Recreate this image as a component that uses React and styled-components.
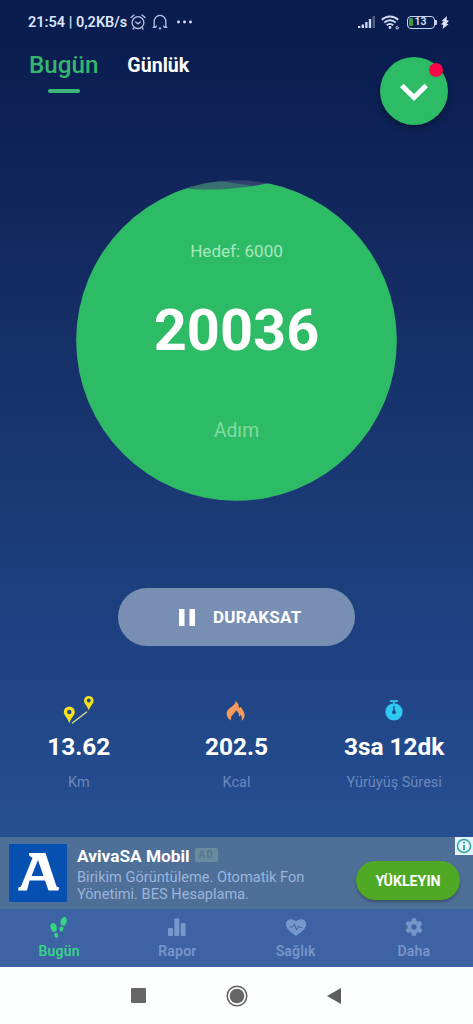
import styled, { createGlobalStyle } from "styled-components";

const GlobalStyle = createGlobalStyle`
  * {
    box-sizing: border-box;
  }
  body {
    margin: 0;
    font-family: Roboto, "Noto Sans", sans-serif;
  }
  button {
    border: 0;
    padding: 0;
    font-family: inherit;
  }
  svg {
    display: block;
    flex: none;
  }
`;

const Screen = styled.div`
  display: flex;
  flex-direction: column;
  width: 473px;
  height: 1024px;
  overflow: hidden;
  background: linear-gradient(#091c4d 0, #0c2055 100px, #13295f 240px, #18356f 430px, #1d4180 620px, #264f92 837px);
`;

const StatusBar = styled.div`
  display: flex;
  align-items: center;
  justify-content: space-between;
  height: 44px;
  padding: 0 24px 0 28px;
  color: #dbe4fa;
`;

const StatusGroup = styled.div`
  display: flex;
  align-items: center;
  gap: ${(p) => p.$gap}px;
`;

const StatusText = styled.span`
  width: 96px;
  font-size: 14.5px;
  font-weight: 600;
  white-space: nowrap;
`;

const Header = styled.header`
  display: flex;
  justify-content: space-between;
  height: 136px;
  padding: 0 25px 0 29px;
`;

const Tabs = styled.nav`
  display: flex;
  gap: 29px;
`;

const Tab = styled.div`
  display: flex;
  flex-direction: column;
  align-items: center;
  height: 50px;
  padding-top: ${(p) => (p.$active ? 6 : 9)}px;
  color: ${(p) => (p.$active ? "#35b56e" : "#fff")};
  font-size: ${(p) => (p.$active ? 24.2 : 19.6)}px;
  font-weight: ${(p) => (p.$active ? 500 : 700)};
  line-height: ${(p) => (p.$active ? 30 : 26)}px;

  &::after {
    content: "";
    display: ${(p) => (p.$active ? "block" : "none")};
    width: 32px;
    height: 4px;
    margin-top: 9px;
    border-radius: 2px;
    background: #3cb878;
  }
`;

const ExpandButton = styled.button`
  position: relative;
  display: grid;
  place-items: center;
  width: 68px;
  height: 68px;
  margin-top: 13px;
  border-radius: 50%;
  background: #2dbb66;
  box-shadow: 0 3px 6px rgba(0, 0, 0, 0.35);
`;

const Dot = styled.span`
  position: absolute;
  top: 6px;
  right: 5px;
  width: 14px;
  height: 14px;
  border-radius: 50%;
  background: #fb0548;
`;

const Dial = styled.section`
  position: relative;
  display: flex;
  flex-direction: column;
  align-items: center;
  flex: none;
  width: 321px;
  height: 321px;
  margin: 0 auto;
`;

const DialShape = styled.svg`
  position: absolute;
  inset: 0;
`;

const DialText = styled.span`
  position: relative;
  margin-top: ${(p) => p.$top}px;
  color: ${(p) => p.$color};
  font-size: ${(p) => p.$size}px;
  font-weight: ${(p) => p.$weight || 400};
  line-height: ${(p) => p.$line}px;
`;

const PauseButton = styled.button`
  display: flex;
  align-items: center;
  flex: none;
  width: 237px;
  height: 58px;
  margin: 87px auto 0;
  padding-left: 61px;
  gap: 18px;
  border-radius: 29px;
  background: #788fb3;
  color: #fff;
  font-size: 17px;
  font-weight: 700;
  letter-spacing: 0.2px;
`;

const Stats = styled.section`
  display: grid;
  grid-template-columns: repeat(3, 1fr);
  height: 191px;
  padding-top: 49px;
`;

const Stat = styled.div`
  display: flex;
  flex-direction: column;
  align-items: center;
`;

const StatValue = styled.strong`
  margin-top: 6px;
  color: #fff;
  font-size: 24.4px;
  font-weight: 700;
  line-height: 32px;
`;

const StatLabel = styled.span`
  margin-top: 10px;
  color: #6a89bd;
  font-size: 14.5px;
  line-height: 20px;
`;

const Ad = styled.aside`
  position: relative;
  display: flex;
  flex: none;
  height: 72px;
  padding: 7px 13px 0 9px;
  background: #4e6f98;
`;

const AdText = styled.div`
  flex: 1;
  padding: 2px 0 0 10px;
`;

const AdTitle = styled.div`
  display: flex;
  align-items: center;
  gap: 5px;
  color: #fff;
  font-size: 17.3px;
  font-weight: 700;
  line-height: 20px;
`;

const AdBadge = styled.span`
  width: 23px;
  height: 14px;
  margin-top: -2px;
  border-radius: 2px;
  background: #6d8b9f;
  color: #547690;
  font-size: 10px;
  letter-spacing: 1px;
  line-height: 14px;
  text-align: center;
`;

const AdBody = styled.p`
  margin: 3px 0 0;
  color: #9bb5dc;
  font-size: 14.6px;
  line-height: 17px;
  white-space: nowrap;
`;

const InstallButton = styled.button`
  width: 104px;
  height: 39px;
  margin-top: 17px;
  border-radius: 20px;
  background: #4fa925;
  box-shadow: 0 2px 3px rgba(0, 0, 0, 0.3);
  color: #fff;
  font-size: 14.2px;
  font-weight: 700;
`;

const AdInfo = styled.span`
  position: absolute;
  top: 0;
  right: 0;
  width: 18px;
  height: 18px;
  background: #e6f3f8;
`;

const BottomTabs = styled.nav`
  display: grid;
  grid-template-columns: repeat(4, 1fr);
  flex: none;
  height: 58px;
  background: #3d63a4;
`;

const BottomTab = styled.div`
  display: flex;
  flex-direction: column;
  align-items: center;
  padding-top: 7px;
  color: ${(p) => (p.$active ? "#37d487" : "#7796ca")};
  font-size: 14px;
  font-weight: 600;
  line-height: 18px;
  letter-spacing: 0.2px;

  svg {
    margin-bottom: 2px;
  }
`;

const SystemNav = styled.div`
  display: flex;
  align-items: center;
  justify-content: space-between;
  flex: 1;
  padding: 0 132px 0 131px;
  background: #fdfefe;
`;

const AlarmIcon = () => (
  <svg width="16" height="16" viewBox="0 0 16 16" fill="none" stroke="#b9c6e8" strokeWidth="1.3" strokeLinecap="round">
    <circle cx="8" cy="8.6" r="5.9" />
    <path d="M1 3.6 4 1M15 3.6 12 1M5.7 8l2.3 1.8L10.300 8M3.800 14l-.8 1M12.200 14l.8 1" />
  </svg>
);

const HeadsetIcon = () => (
  <svg width="16" height="16" viewBox="0 0 16 16" fill="none" stroke="#b9c6e8" strokeWidth="1.3">
    <path d="M2.200 13V7.200a5.800 5.800 0 0 1 11.600 0V13M.6 13.400h2.600c1 0 1.300-.6 1.300-1.800M15.400 13.400h-2.600c-1 0-1.300-.6-1.300-1.800" />
    <path d="M6.800 14.400h2.400" strokeWidth="1.800" />
  </svg>
);

const DotsIcon = () => (
  <svg width="19" height="4" viewBox="0 0 19 4" fill="#dbe4fa">
    <circle cx="4.500" cy="2" r="1.400" />
    <circle cx="10.500" cy="2" r="1.400" />
    <circle cx="16.500" cy="2" r="1.400" />
  </svg>
);

const SignalIcon = () => (
  <svg width="17" height="12" viewBox="0 0 17 12" fill="#d0daf3">
    <path d="M0 10h2.3v2H0zM3.6 8.6H6V12H3.6zM7.2 6h2.3v6H7.2zM10.8 3h2.4v9h-2.4z" />
    <path d="M14.6 0H17v12h-2.4z" opacity=".35" />
  </svg>
);

const WifiIcon = () => (
  <svg width="19" height="15" viewBox="0 0 19 15" fill="none" stroke="#d0daf3" strokeWidth="2">
    <path d="M.8 4.7a12 12 0 0 1 16.400 0M3.300 7.600a8.200 8.200 0 0 1 11.400 0M5.800 10.300a4.600 4.600 0 0 1 6.400 0" />
    <circle cx="9" cy="12.500" r="1.400" fill="#d0daf3" stroke="none" />
    <circle cx="16.200" cy="12.800" r="1.200" strokeWidth="1" />
  </svg>
);

const Battery = styled.span`
  position: relative;
  display: flex;
  align-items: center;
  width: 28px;
  height: 13px;
  padding-left: 1px;
  border: 1.5px solid #cbd7f2;
  border-radius: 4px;
  font-size: 10.5px;
  font-weight: 600;
  line-height: 12px;

  &::before {
    content: "";
    width: 4px;
    height: 8px;
    margin-right: 2px;
    border-radius: 1px;
    background: #3f9a3c;
  }
  &::after {
    content: "";
    position: absolute;
    right: -3.5px;
    top: 3px;
    width: 2px;
    height: 5px;
    border-radius: 0 1px 1px 0;
    background: #cbd7f2;
  }
`;

const BoltIcon = () => (
  <svg width="8" height="13" viewBox="0 0 8 13" fill="#dbe4fa">
    <path d="M6 0 .8 4.800l2 .8L0 8.200l2.300.7L1.500 13 7.500 8.200 5.400 7.400 8 4.800 5.500 4z" />
  </svg>
);

const RouteIcon = () => (
  <svg width="32" height="30" viewBox="0 0 32 30">
    <path d="M9 28.3 24 16.8" stroke="#dbe88a" strokeWidth="1.3" />
    <path
      fill="#f7e11d"
      fillRule="evenodd"
      d="M6.3 28.5C5 23 .8 20.500.8 17a5.500 5.500 0 0 1 11 0c0 3.500-4.200 6-5.500 11.500zM6.300 14.700a2.200 2.200 0 1 0 0 4.400 2.200 2.200 0 0 0 0-4.400zM25.800 15.500c-1.200-4.500-4.800-6.700-4.800-9.800a4.800 4.800 0 0 1 9.600 0c0 3.100-3.600 5.300-4.800 9.800zM25.800 3.500a2 2 0 1 0 0 4 2 2 0 0 0 0-4z"
    />
  </svg>
);

const FlameIcon = () => (
  <svg width="20" height="30" viewBox="0 0 20 30">
    <path
      fill="#f79a5b"
      d="M5.300 25.500C1.500 23.500-.4 19.700 1.200 16 2.600 12.700 9 11 9.900 5.900c2.200 2 3.400 4.700 3 7.600l1.500-1.800c2.400 2.900 4.700 6.200 4.100 9.500-.4 2-1.400 3.600-3 4.500.8-2.200.5-4-1-5.900-.3 1-.8 1.600-1.500 2 .2-3-.8-4.900-2.900-6.500-.4 2.500-3.400 3.900-4.500 5.700-.9 1.400-.9 2.900-.3 4.500z"
    />
  </svg>
);

const TimerIcon = () => (
  <svg width="18" height="30" viewBox="0 0 18 30">
    <circle cx="9" cy="16.900" r="8.600" fill="#2fc8f2" />
    <path d="M5 6.200h8M9 6v3" stroke="#2fc8f2" strokeWidth="1.700" />
    <path d="M9 11.200v5" stroke="#1d4a86" strokeWidth="1.500" />
    <circle cx="9" cy="17.200" r="1.900" fill="#1d4a86" />
  </svg>
);

const AdLogo = () => (
  <svg width="58" height="58" viewBox="0 0 58 58">
    <path fill="#0650b2" d="M0 0h58v58H0z" />
    <path
      fill="#fff"
      fillRule="evenodd"
      d="M20 9h16.500L47.500 42.500l2.500 1-.5 3H39.500L36 36.500H20.500L18 46.500H9l.5-3 2.500-1L23.500 14l-3.300-2.500zM29 16 22.500 32H34.500z"
    />
  </svg>
);

const InfoIcon = () => (
  <svg width="18" height="18" viewBox="0 0 18 18" fill="none" stroke="#2fa9ad" strokeWidth="1.500">
    <circle cx="9" cy="9" r="6.500" />
    <path d="M9 7.800V13M9 4.800v1.700" strokeWidth="1.900" />
  </svg>
);

const StepsIcon = () => (
  <svg width="20" height="24" viewBox="0 0 20 24" fill="currentColor">
    <path d="M3.200 7.200c2.200-.5 4 1.200 4.500 3.600.4 1.800 0 3.200-.4 4.500l-3.500.8C2.900 14.300 1.300 13 1.300 10.600c0-1.600.6-3.100 1.900-3.400z" />
    <ellipse cx="7.200" cy="19.300" rx="1.900" ry="2.600" transform="rotate(-14 7.200 19.300)" />
    <path d="M15.800 1c1.600.2 2.200 2 2 4-.2 2.200-1.500 3.700-2.600 4.900l-3.400-1.400c-.2-1.400-.5-2.800.2-4.500.7-1.800 2.100-3.200 3.800-3z" />
    <ellipse cx="12.400" cy="13" rx="1.900" ry="2.700" transform="rotate(20 12.400 13)" />
  </svg>
);

const ChartIcon = () => (
  <svg width="18" height="24" viewBox="0 0 18 24" fill="currentColor">
    <rect x="0" y="12" width="5" height="8" rx="1" />
    <rect x="6.300" y="2.500" width="5" height="17.500" rx="1" />
    <rect x="12.600" y="7" width="5" height="13" rx="1" />
  </svg>
);

const HeartIcon = () => (
  <svg width="22" height="24" viewBox="0 0 22 24">
    <path
      fill="currentColor"
      d="M11 20C7 17 .8 13 .8 8.300c0-5.200 6.700-6.900 10.200-3 3.500-3.900 10.200-2.200 10.200 3C21.200 13 15 17 11 20z"
    />
    <path d="M5 11h2.500l1.800-3 2.400 6 1.800-4 1 1.500H17" fill="none" stroke="#3d63a4" strokeWidth="1" />
  </svg>
);

const GearIcon = () => (
  <svg width="18" height="24" viewBox="0 0 18 24">
    <path
      fill="currentColor"
      fillRule="evenodd"
      stroke="currentColor"
      strokeWidth=".6"
      strokeLinejoin="round"
      d="M7.300 2.500h3.400l.6 2.700 1.500.9 2.600-.8 1.700 3-2 1.800v1.800l2 1.800-1.700 3-2.600-.8-1.500.9-.6 2.700H7.300l-.6-2.700-1.500-.9-2.600.8-1.700-3 2-1.800v-1.800l-2-1.800 1.700-3 2.600.8 1.500-.9zM9 8a3 3 0 1 0 0 6 3 3 0 0 0 0-6z"
    />
  </svg>
);

const stats = [
  { Icon: RouteIcon, value: "13.62", label: "Km" },
  { Icon: FlameIcon, value: "202.5", label: "Kcal" },
  { Icon: TimerIcon, value: "3sa 12dk", label: "Yürüyüş Süresi" },
];

const bottomTabs = [
  { Icon: StepsIcon, label: "Bugün", active: true },
  { Icon: ChartIcon, label: "Rapor" },
  { Icon: HeartIcon, label: "Sağlık" },
  { Icon: GearIcon, label: "Daha" },
];

const App = () => {
  return (
    <Screen>
      <GlobalStyle />
      <StatusBar>
        <StatusGroup $gap={6}>
          <StatusText>21:54 | 0,2KB/s</StatusText>
          <AlarmIcon />
          <HeadsetIcon />
          <DotsIcon />
        </StatusGroup>
        <StatusGroup $gap={6.5}>
          <SignalIcon />
          <WifiIcon />
          <Battery>13</Battery>
          <BoltIcon />
        </StatusGroup>
      </StatusBar>

      <Header>
        <Tabs>
          <Tab $active>Bugün</Tab>
          <Tab>Günlük</Tab>
        </Tabs>
        <ExpandButton>
          <svg width="30" height="22" viewBox="0 0 30 22" fill="none" stroke="#fff" strokeWidth="5">
            <path d="M2.800 5.500 15 17.500 27.200 5.500" />
          </svg>
          <Dot />
        </ExpandButton>
      </Header>

      <Dial>
        <DialShape width="321" height="321" viewBox="0 0 321 321">
          <clipPath id="dial">
            <circle cx="160.500" cy="160.500" r="160.300" />
          </clipPath>
          <g clipPath="url(#dial)">
            <path fill="#30416f" d="M0 0h321v321H0z" />
            <path fill="#37716f" d="M90 12Q120 0 145 1.500C162 3 175 7 190 6v10H90z" />
            <path fill="#2dbb66" d="M0 8h105c20 2 38 2 55 0 16-1 22-3 34-5h127v318H0z" />
          </g>
        </DialShape>
        <DialText $top={60} $size={17.1} $line={22} $color="#a9e8bd">
          Hedef: 6000
        </DialText>
        <DialText $top={34} $size={57.7} $line={68} $weight={700} $color="#fff">
          20036
        </DialText>
        <DialText $top={54} $size={19.3} $line={26} $color="#83dba1">
          Adım
        </DialText>
      </Dial>

      <PauseButton>
        <svg width="16" height="17" viewBox="0 0 16 17" fill="#fff">
          <path d="M0 0h5.500v17H0zM10.500 0H16v17h-5.500z" />
        </svg>
        DURAKSAT
      </PauseButton>

      <Stats>
        {stats.map(({ Icon, value, label }) => (
          <Stat key={label}>
            <Icon />
            <StatValue>{value}</StatValue>
            <StatLabel>{label}</StatLabel>
          </Stat>
        ))}
      </Stats>

      <Ad>
        <AdLogo />
        <AdText>
          <AdTitle>
            AvivaSA Mobil
            <AdBadge>AD</AdBadge>
          </AdTitle>
          <AdBody>
            Birikim Görüntüleme. Otomatik Fon
            <br />
            Yönetimi. BES Hesaplama.
          </AdBody>
        </AdText>
        <InstallButton>YÜKLEYIN</InstallButton>
        <AdInfo>
          <InfoIcon />
        </AdInfo>
      </Ad>

      <BottomTabs>
        {bottomTabs.map(({ Icon, label, active }) => (
          <BottomTab key={label} $active={active}>
            <Icon />
            {label}
          </BottomTab>
        ))}
      </BottomTabs>

      <SystemNav>
        <svg width="15" height="15" viewBox="0 0 15 15" fill="#666">
          <rect width="15" height="15" rx="1" />
        </svg>
        <svg width="22" height="22" viewBox="0 0 22 22">
          <circle cx="11" cy="11" r="9.800" fill="none" stroke="#5e5e5e" strokeWidth="1.500" />
          <circle cx="11" cy="11" r="7.300" fill="#666" />
        </svg>
        <svg width="14" height="16" viewBox="0 0 14 16" fill="#5e5e5e">
          <path d="M14 0v16L0 8z" />
        </svg>
      </SystemNav>
    </Screen>
  );
};

export default App;
